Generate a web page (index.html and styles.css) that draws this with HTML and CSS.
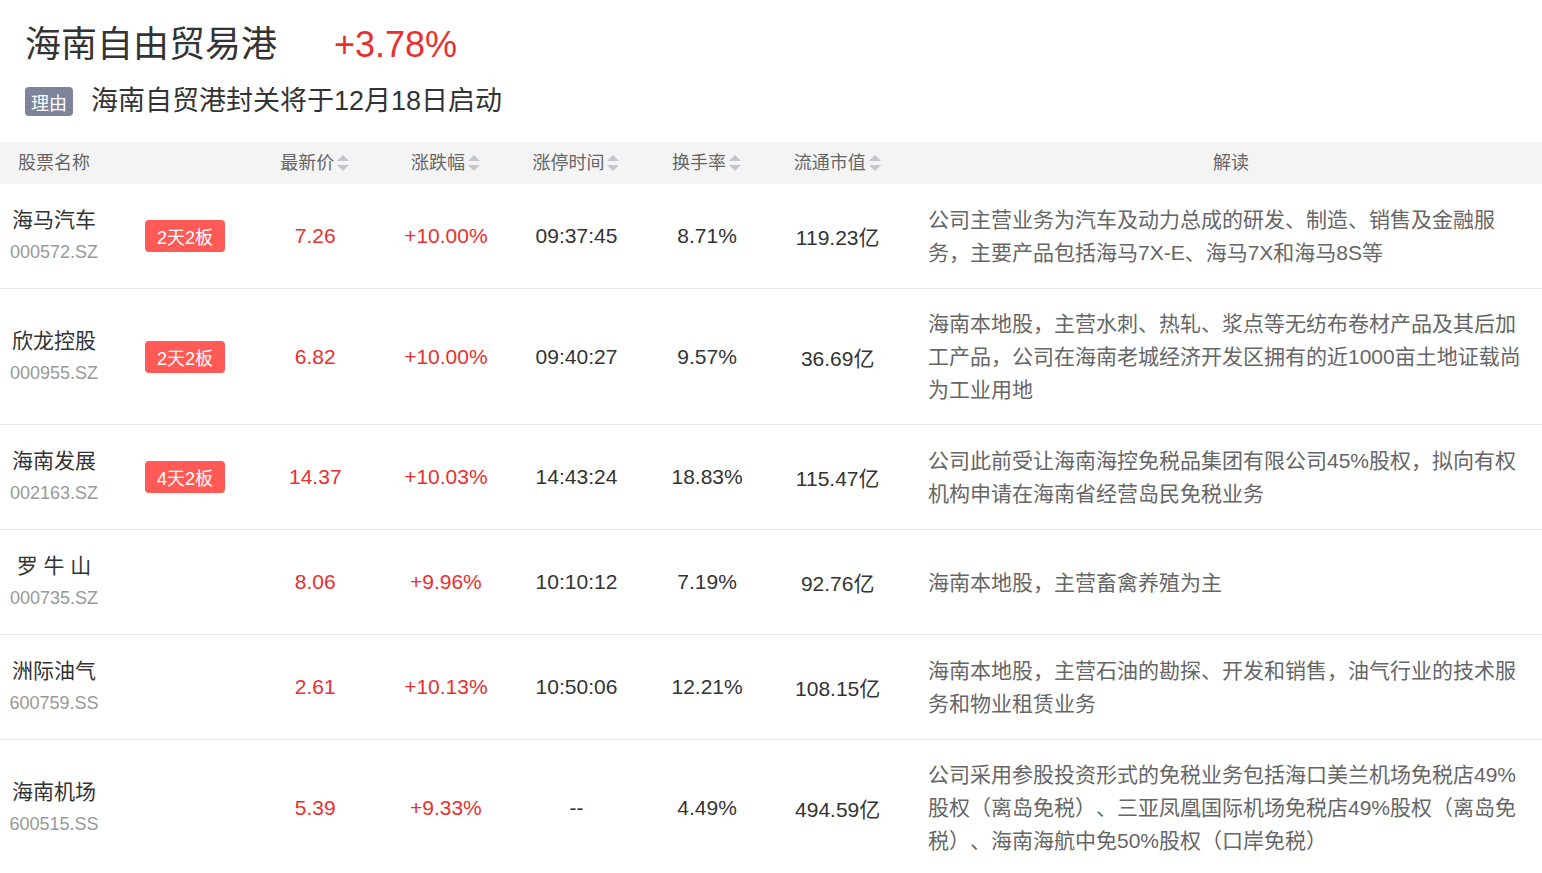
FILE: index.html
```html
<!DOCTYPE html>
<html lang="zh-CN">
<head>
<meta charset="utf-8">
<title>海南自由贸易港</title>
<link rel="stylesheet" href="styles.css">
</head>
<body>
<section class="topic">
  <div class="title-line">
    <h1 class="title">海南自由贸易港</h1>
    <span class="title-change">+3.78%</span>
  </div>
  <div class="reason-line">
    <span class="reason-tag">理由</span>
    <span class="reason-text">海南自贸港封关将于12月18日启动</span>
  </div>
</section>

<div class="table">
  <div class="row head">
    <div class="cell">股票名称</div>
    <div class="cell"></div>
    <div class="cell">最新价<svg class="sort" viewBox="0 0 14 18"><path d="M7 1 L13 7 L1 7 Z"/><path d="M1 11 L13 11 L7 17 Z"/></svg></div>
    <div class="cell">涨跌幅<svg class="sort" viewBox="0 0 14 18"><path d="M7 1 L13 7 L1 7 Z"/><path d="M1 11 L13 11 L7 17 Z"/></svg></div>
    <div class="cell">涨停时间<svg class="sort" viewBox="0 0 14 18"><path d="M7 1 L13 7 L1 7 Z"/><path d="M1 11 L13 11 L7 17 Z"/></svg></div>
    <div class="cell">换手率<svg class="sort" viewBox="0 0 14 18"><path d="M7 1 L13 7 L1 7 Z"/><path d="M1 11 L13 11 L7 17 Z"/></svg></div>
    <div class="cell">流通市值<svg class="sort" viewBox="0 0 14 18"><path d="M7 1 L13 7 L1 7 Z"/><path d="M1 11 L13 11 L7 17 Z"/></svg></div>
    <div class="cell desc-head">解读</div>
  </div>

  <div class="row">
    <div class="cell name-cell"><div class="name">海马汽车</div><div class="code">000572.SZ</div></div>
    <div class="cell badge-cell"><span class="badge">2天2板</span></div>
    <div class="cell num red">7.26</div>
    <div class="cell num red">+10.00%</div>
    <div class="cell num">09:37:45</div>
    <div class="cell num">8.71%</div>
    <div class="cell num">119.23亿</div>
    <div class="cell desc">公司主营业务为汽车及动力总成的研发、制造、销售及金融服务，主要产品包括海马7X-E、海马7X和海马8S等</div>
  </div>

  <div class="row">
    <div class="cell name-cell"><div class="name">欣龙控股</div><div class="code">000955.SZ</div></div>
    <div class="cell badge-cell"><span class="badge">2天2板</span></div>
    <div class="cell num red">6.82</div>
    <div class="cell num red">+10.00%</div>
    <div class="cell num">09:40:27</div>
    <div class="cell num">9.57%</div>
    <div class="cell num">36.69亿</div>
    <div class="cell desc">海南本地股，主营水刺、热轧、浆点等无纺布卷材产品及其后加工产品，公司在海南老城经济开发区拥有的近1000亩土地证载尚为工业用地</div>
  </div>

  <div class="row">
    <div class="cell name-cell"><div class="name">海南发展</div><div class="code">002163.SZ</div></div>
    <div class="cell badge-cell"><span class="badge">4天2板</span></div>
    <div class="cell num red">14.37</div>
    <div class="cell num red">+10.03%</div>
    <div class="cell num">14:43:24</div>
    <div class="cell num">18.83%</div>
    <div class="cell num">115.47亿</div>
    <div class="cell desc">公司此前受让海南海控免税品集团有限公司45%股权，拟向有权机构申请在海南省经营岛民免税业务</div>
  </div>

  <div class="row">
    <div class="cell name-cell"><div class="name">罗 牛 山</div><div class="code">000735.SZ</div></div>
    <div class="cell badge-cell"></div>
    <div class="cell num red">8.06</div>
    <div class="cell num red">+9.96%</div>
    <div class="cell num">10:10:12</div>
    <div class="cell num">7.19%</div>
    <div class="cell num">92.76亿</div>
    <div class="cell desc">海南本地股，主营畜禽养殖为主</div>
  </div>

  <div class="row">
    <div class="cell name-cell"><div class="name">洲际油气</div><div class="code">600759.SS</div></div>
    <div class="cell badge-cell"></div>
    <div class="cell num red">2.61</div>
    <div class="cell num red">+10.13%</div>
    <div class="cell num">10:50:06</div>
    <div class="cell num">12.21%</div>
    <div class="cell num">108.15亿</div>
    <div class="cell desc">海南本地股，主营石油的勘探、开发和销售，油气行业的技术服务和物业租赁业务</div>
  </div>

  <div class="row">
    <div class="cell name-cell"><div class="name">海南机场</div><div class="code">600515.SS</div></div>
    <div class="cell badge-cell"></div>
    <div class="cell num red">5.39</div>
    <div class="cell num red">+9.33%</div>
    <div class="cell num">--</div>
    <div class="cell num">4.49%</div>
    <div class="cell num">494.59亿</div>
    <div class="cell desc">公司采用参股投资形式的免税业务包括海口美兰机场免税店49%股权（离岛免税）、三亚凤凰国际机场免税店49%股权（离岛免税）、海南海航中免50%股权（口岸免税）</div>
  </div>
</div>
</body>
</html>
```

FILE: styles.css
```css
* { box-sizing: border-box; }

html, body {
  margin: 0;
  padding: 0;
  background: #fff;
}

body {
  font-family: "Liberation Sans", Arial, "Noto Sans CJK SC", sans-serif;
  color: #333;
  text-spacing-trim: space-all;
}

.topic {
  padding: 21px 0 0 25px;
  margin-bottom: 26px;
}

.title-line {
  display: flex;
  align-items: center;
  height: 48px;
}

.title {
  margin: 0;
  font-size: 36px;
  font-weight: normal;
  line-height: 48px;
  color: #333;
}

.title-change {
  margin-left: 57px;
  font-size: 36px;
  line-height: 48px;
  color: #e93030;
}

.reason-line {
  display: flex;
  align-items: center;
  margin-top: 18px;
  height: 29px;
}

.reason-tag {
  display: inline-flex;
  align-items: center;
  justify-content: center;
  width: 48px;
  height: 29px;
  border-radius: 4px;
  background: #7e8499;
  color: #fff;
  font-size: 18px;
}

.reason-text {
  margin-left: 18px;
  font-size: 27px;
  line-height: 29px;
  color: #333;
}

.row {
  display: grid;
  grid-template-columns: 108px 142px repeat(5, 130.6px) 1fr;
  border-bottom: 1px solid #ebebeb;
}

.row.head {
  background: #f4f4f4;
  border-bottom: none;
  height: 42px;
}

.cell {
  display: flex;
  align-items: center;
  justify-content: center;
  text-align: center;
}

.head .cell {
  font-size: 18px;
  line-height: 42px;
  color: #666;
}

.desc-head {
  padding: 0 8px 0 25px;
}

.sort {
  width: 14px;
  height: 18px;
  margin-left: 2px;
  fill: #c3c6cc;
}

.name-cell {
  flex-direction: column;
  padding: 19px 0;
}

.name {
  font-size: 21px;
  line-height: 33px;
  color: #333;
  white-space: pre;
}

.code {
  font-size: 18px;
  line-height: 33px;
  color: #999;
}

.badge-cell {
  padding-left: 12px;
}

.badge {
  display: inline-flex;
  align-items: center;
  justify-content: center;
  width: 80px;
  height: 32px;
  border-radius: 4px;
  background: #ff5a55;
  color: #fff;
  font-size: 18px;
}

.num {
  font-size: 21px;
  color: #333;
}

.num.red {
  color: #e93030;
}

.desc {
  justify-content: flex-start;
  text-align: left;
  padding: 18px 8px 18px 25px;
  font-size: 21px;
  line-height: 33px;
  color: #666;
}
```
